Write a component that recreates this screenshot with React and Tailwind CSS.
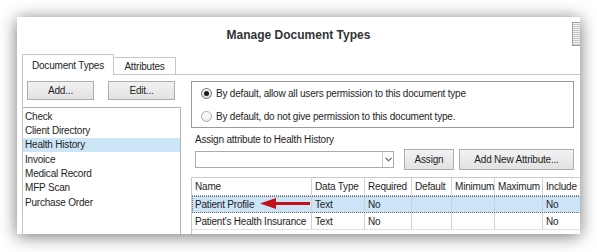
import React from "react";

const docTypes = [
  "Check",
  "Client Directory",
  "Health History",
  "Invoice",
  "Medical Record",
  "MFP Scan",
  "Purchase Order",
];

const columns = [
  { label: "Name", w: "w-[120px]" },
  { label: "Data Type", w: "w-[53px]" },
  { label: "Required", w: "w-[47px]" },
  { label: "Default", w: "w-[40px]" },
  { label: "Minimum", w: "w-[43px]" },
  { label: "Maximum", w: "w-[48px]" },
  { label: "Include in Search", w: "w-[90px]" },
];

const rows = [
  ["Patient Profile", "Text", "No", "", "", "", "No"],
  ["Patient's Health Insurance", "Text", "No", "", "", "", "No"],
];

const Radio = ({ checked }) => (
  <span
    className={
      "w-[11px] h-[11px] rounded-full border flex items-center justify-center shrink-0 " +
      (checked
        ? "border-[#6e6e6e] bg-linear-to-b from-[#f4f4f4] to-[#dcdcdc]"
        : "border-[#a9a9a9] bg-linear-to-b from-white to-[#ececec]")
    }
  >
    {checked && <span className="w-[5px] h-[5px] rounded-full bg-[#1c1c1c]" />}
  </span>
);

const WinButton = ({ children, className = "" }) => (
  <button
    className={
      "shrink-0 border border-[#adadad] bg-linear-to-b from-[#f2f2f2] to-[#e2e2e2] text-[#1e1e1e] flex items-center justify-center " +
      className
    }
  >
    {children}
  </button>
);

export default function App() {
  return (
    <div className="w-[597px] h-[252px] bg-white pt-[17px] pl-[17px] font-['Liberation_Sans',Arial,sans-serif] text-[10px] tracking-[-0.2px] text-[#1e1e1e]">
      <div className="relative w-[563px] h-[217px] bg-white shadow-[0_2px_16px_rgba(0,0,0,0.55)] flex flex-col overflow-hidden">
        {/* title */}
        <div className="h-[36px] grid grid-cols-[1fr_auto_1fr]">
          <div />
          <h1 className="self-center text-[12px] font-bold tracking-normal text-[#333]">
            Manage Document Types
          </h1>
          <div className="justify-self-end mt-[5px] w-[8px] h-[24px] border border-r-0 border-[#a0a0a0] bg-[repeating-linear-gradient(to_bottom,#f4f4f4_0px,#f4f4f4_1px,#c4c4c4_1px,#c4c4c4_2px)]" />
        </div>

        {/* tab strip */}
        <div className="h-[22px] flex items-end pl-[5px]">
          <div className="w-[92px] h-[21px] border border-b-0 border-[#c6c6c6] bg-white flex items-center justify-center">
            Document Types
          </div>
          <div className="w-[62px] h-[18px] border border-l-0 border-[#c6c6c6] bg-white flex items-center justify-center">
            Attributes
          </div>
          <div className="flex-1 h-px bg-[#c6c6c6]" />
        </div>

        {/* content */}
        <div className="flex-1 flex pl-[5px] min-h-0">
          {/* left panel */}
          <div className="w-[159px] shrink-0 flex flex-col border-l border-[#c6c6c6]">
            <div className="flex justify-between pl-[4px] pr-[6px] pt-[6px]">
              <WinButton className="w-[67px] h-[19px]">Add...</WinButton>
              <WinButton className="w-[67px] h-[19px]">Edit...</WinButton>
            </div>
            <div className="mt-[7px] flex-1 border-t border-r border-[#b4b4b4] pt-[1px]">
              {docTypes.map((d) => (
                <div
                  key={d}
                  className={
                    "h-[14.33px] flex items-center pl-[2px] " +
                    (d === "Health History" ? "bg-[#cde6f7]" : "")
                  }
                >
                  {d}
                </div>
              ))}
            </div>
          </div>

          {/* right panel */}
          <div className="flex-1 min-w-0 ml-[10px] flex flex-col">
            <div className="mt-[6px] w-[383px] h-[47px] border border-[#9a9a9a] flex flex-col justify-center gap-[8px] pl-[9px]">
              <label className="flex items-center gap-[4px]">
                <Radio checked />
                By default, allow all users permission to this document type
              </label>
              <label className="flex items-center gap-[4px]">
                <Radio />
                By default, do not give permission to this document type.
              </label>
            </div>

            <div className="mt-[4px] h-[14px] flex items-center pl-[4px]">
              Assign attribute to Health History
            </div>

            <div className="mt-[3px] flex items-center pl-[4px]">
              <div className="w-[199px] h-[17px] shrink-0 border border-[#ababab] flex justify-end">
                <div className="w-[11px] border-l border-[#c8c8c8] flex items-center justify-center">
                  <svg width="7" height="5" viewBox="0 0 7 5">
                    <path d="M0.5 0.8 L3.5 3.8 L6.5 0.8" fill="none" stroke="#555" strokeWidth="1.1" />
                  </svg>
                </div>
              </div>
              <WinButton className="ml-[10px] w-[50px] h-[21px]">Assign</WinButton>
              <WinButton className="ml-[5px] w-[115px] h-[21px]">Add New Attribute...</WinButton>
            </div>

            {/* attribute table */}
            <div className="mt-[7px] flex-1 border-l border-t border-[#c8c8c8] overflow-hidden">
              <div className="flex h-[18px] border-b border-dotted border-[#9a9a9a] w-max">
                {columns.map((c) => (
                  <div
                    key={c.label}
                    className={c.w + " shrink-0 h-full border-r border-[#d2d2d2] flex items-center pl-[3px] whitespace-nowrap"}
                  >
                    {c.label}
                  </div>
                ))}
              </div>
              {rows.map((r, i) => (
                <div
                  key={i}
                  className={
                    "flex h-[17px] w-max " +
                    (i === 0 ? "bg-[#cce4f7] outline outline-1 outline-dotted outline-[#6a6a6a] -outline-offset-1" : "border-b border-[#e2e2e2]")
                  }
                >
                  {r.map((cell, j) => (
                    <div
                      key={j}
                      className={columns[j].w + " shrink-0 h-full border-r border-[#d2d2d2] flex items-center pl-[3px] whitespace-nowrap"}
                    >
                      {cell}
                    </div>
                  ))}
                </div>
              ))}
            </div>
          </div>
        </div>

        {/* annotation arrow */}
        <svg
          className="absolute left-[243px] top-[181px]"
          width="50"
          height="11"
          viewBox="0 0 50 11"
        >
          <polygon points="0,5.5 16,0 16,11" fill="#c1121c" />
          <rect x="14" y="4" width="36" height="3" fill="#c1121c" />
        </svg>
      </div>
    </div>
  );
}
